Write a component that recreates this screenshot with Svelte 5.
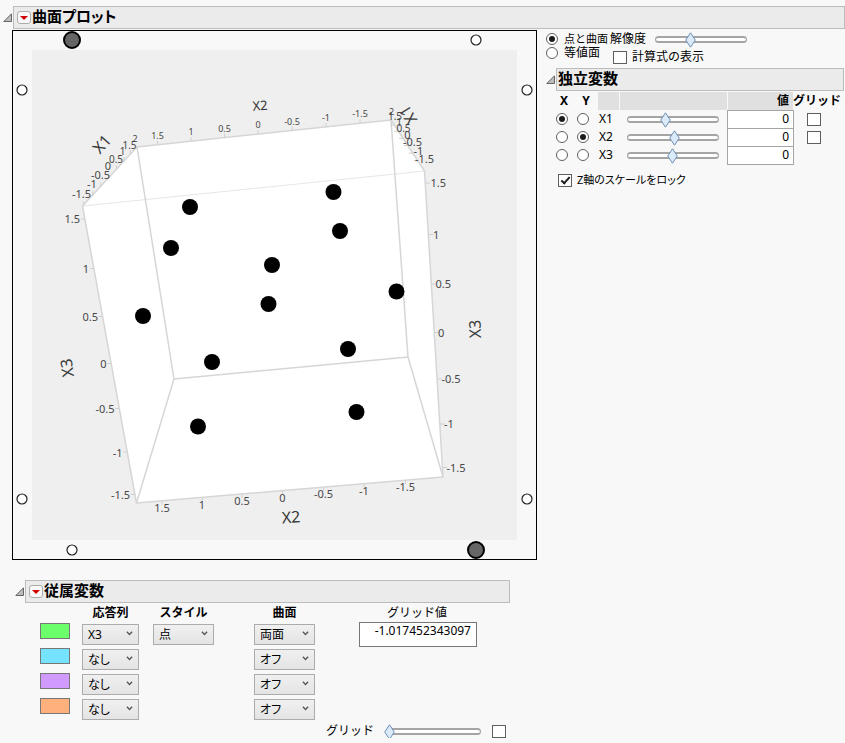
<script>
  let resolution = $state(39);
  let gridPosition = $state(0);
  let display = $state('points');
  let showFormula = $state(false);
  let lockZ = $state(true);
  let showGrid = $state(false);
  let xAxis = $state('X1');
  let yAxis = $state('X2');
  let gridValue = $state('-1.017452343097');

  let variables = $state([
    { name: 'X1', pos: 42, value: '0', grid: false, hasGrid: true },
    { name: 'X2', pos: 52, value: '0', grid: false, hasGrid: true },
    { name: 'X3', pos: 50, value: '0', grid: false, hasGrid: false }
  ]);

  let responses = $state([
    { color: '#6cff6c', column: 'X3', style: '点', surface: '両面' },
    { color: '#75e3ff', column: 'なし', style: null, surface: 'オフ' },
    { color: '#d19aff', column: 'なし', style: null, surface: 'オフ' },
    { color: '#ffb07c', column: 'なし', style: null, surface: 'オフ' }
  ]);

  const points = [
    [190, 207], [333.5, 192], [171, 248], [340, 231], [272, 265], [396.5, 291.5],
    [143, 316], [268.5, 304], [212, 362], [348, 349], [198, 426.5], [356.5, 412]
  ];

  const smallHandles = [[476, 40], [22, 90], [527, 90], [22, 499], [527, 499], [72, 550]];
  const largeHandles = [[72, 40], [476, 550]];

  // [text, x, baseline, size, anchor]
  const tickLabels = [
    ['2', 135, 142, 9, 'middle'], ['1.5', 157.5, 139, 9, 'middle'], ['1', 191, 135, 9, 'middle'],
    ['0.5', 224.5, 131.5, 9, 'middle'], ['0', 258, 128, 9, 'middle'], ['-0.5', 292, 124.5, 9, 'middle'],
    ['-1', 326, 121, 9, 'middle'], ['-1.5', 360, 117, 9, 'middle'], ['2', 391.5, 115, 9, 'middle'],

    ['1.5', 129.5, 149, 10, 'middle'], ['1', 122.5, 155, 10, 'middle'], ['0.5', 116, 162.5, 10, 'middle'],
    ['0', 108, 170, 11, 'middle'], ['-0.5', 100.5, 178.5, 11, 'middle'], ['-1', 92, 188, 11, 'middle'],
    ['-1.5', 81.5, 198, 11, 'middle'],

    ['1.5', 395, 120, 10, 'middle'], ['1', 399, 126, 10, 'middle'], ['0.5', 403.5, 131.5, 10, 'middle'],
    ['0', 407.5, 139, 11, 'middle'], ['-0.5', 412.5, 146, 11, 'middle'], ['-1', 418.5, 155, 11, 'middle'],
    ['-1.5', 424.5, 163, 11, 'middle'],

    ['1.5', 80, 223, 11, 'end'], ['1', 89, 272.5, 11, 'end'], ['0.5', 98, 321, 11, 'end'],
    ['0', 106.5, 368, 11, 'end'], ['-0.5', 114.5, 413, 11, 'end'], ['-1', 122.5, 456.5, 11, 'end'],
    ['-1.5', 130, 499, 11, 'end'],

    ['1.5', 430.5, 187, 11, 'start'], ['1', 433, 238.5, 11, 'start'], ['0.5', 435.5, 288, 11, 'start'],
    ['0', 438, 336.5, 11, 'start'], ['-0.5', 441.5, 383, 11, 'start'], ['-1', 444, 428, 11, 'start'],
    ['-1.5', 446.5, 472, 11, 'start'],

    ['1.5', 162, 512, 11, 'middle'], ['1', 202, 508.5, 11, 'middle'], ['0.5', 242, 505, 11, 'middle'],
    ['0', 282.5, 501.5, 11, 'middle'], ['-0.5', 323.5, 498, 11, 'middle'], ['-1', 364, 494.5, 11, 'middle'],
    ['-1.5', 405.5, 491, 11, 'middle']
  ];

  // [text, centre x, centre y, rotation, size]
  const axisTitles = [
    ['X2', 260, 105.5, -5, 13], ['X1', 102, 144, -48, 16], ['X1', 408, 115, -122, 16],
    ['X3', 67, 368, -98, 16], ['X3', 475, 329, -92, 16], ['X2', 291, 517, -4, 16]
  ];

  const lerp = (a, b, t) => a + (b - a) * t;
  const ticks = [
    ...[157.5, 191, 224.5, 258, 292, 326, 360].map((x) => {
      const y = lerp(147, 120, (x - 137) / 254);
      return [x, y, x, y - 4];
    }),
    ...[219, 268.5, 316.5, 363.5, 408.5, 452, 494.5].map((y) => {
      const x = lerp(82.5, 136.5, (y - 206) / 297);
      return [x, y, x - 4, y];
    }),
    ...[183, 234.5, 284, 332.5, 379, 424, 467.5].map((y) => {
      const x = lerp(424.5, 443, (y - 171) / 306);
      return [x, y, x + 5, y];
    }),
    ...[162, 202, 242, 282.5, 323.5, 364, 405.5].map((x) => {
      const y = lerp(503, 477, (x - 136.5) / 306.5);
      return [x, y, x, y + 4];
    }),
    ...[0.12, 0.24, 0.38, 0.52, 0.67, 0.82, 0.99].map((t) => {
      const x = lerp(137, 83, t), y = lerp(147, 206, t);
      return [x, y, x, y - 4];
    }),
    ...[0.1, 0.22, 0.36, 0.5, 0.65, 0.8].map((t) => {
      const x = lerp(391, 424.5, t), y = lerp(120, 171, t);
      return [x, y, x - 4, y];
    })
  ];
</script>

{#snippet disclosure(label)}
  <button class="disclosure" type="button" aria-label={label}>
    <svg width="9" height="9" viewBox="0 0 9 9"><path d="M8.5 0.8V8.5H0.8Z" fill="#bdbdbd" stroke="#666" /></svg>
  </button>
{/snippet}

{#snippet redMenu(label)}
  <button class="red-menu" type="button" aria-label={label}>
    <svg width="8" height="4" viewBox="0 0 8 4"><path d="M0 0H8L4 4Z" fill="#d00000" /></svg>
  </button>
{/snippet}

{#snippet thumb(pos)}
  <svg class="thumb" style="left: {pos}%" width="11" height="16" viewBox="0 0 11 16">
    <path d="M5.5 0.8L10.3 8L5.5 15.2L0.7 8Z" fill="#dbeaf8" stroke="#6f8fb3" />
  </svg>
{/snippet}

{#snippet chevron()}
  <svg class="chevron" width="7" height="5" viewBox="0 0 7 5"><path d="M0.9 0.7L3.5 3.5L6.1 0.7" fill="none" stroke="#555" stroke-width="1.3" /></svg>
{/snippet}

<main>
  <header class="outline">
    {@render disclosure('曲面プロットの開閉')}
    <div class="bar">
      {@render redMenu('曲面プロットのメニュー')}
      <h1>曲面プロット</h1>
    </div>
  </header>

  <div class="body">
    <div class="left">
      <svg class="plot" viewBox="12 30 525 530" role="img" aria-label="曲面プロット">
        <rect x="12.5" y="30.5" width="524" height="529" fill="#f8f8f8" stroke="#000" />
        <rect x="32" y="50" width="485" height="490" fill="#efefef" />
        <path d="M137 147L391 120L424.5 171L443 477L136.5 503L82.5 206Z" fill="#fff" />
        <path d="M82.5 206L424.5 171" stroke="#e6e6e6" />
        <g stroke="#d6d6d6" stroke-width="1.5" fill="none" stroke-linejoin="round">
          <path d="M137 147L391 120L424.5 171L443 477L136.5 503L82.5 206Z" />
          <path d="M137 147L174 379L408 357L391 120M174 379L136.5 503M408 357L443 477" />
        </g>
        {#each ticks as [x1, y1, x2, y2]}
          <line {x1} {y1} {x2} {y2} stroke="#d0d0d0" />
        {/each}
        {#each tickLabels as [text, x, y, size, anchor]}
          <text {x} {y} font-size={size} text-anchor={anchor} fill="#484848">{text}</text>
        {/each}
        {#each axisTitles as [text, x, y, angle, size]}
          <text transform="translate({x} {y}) rotate({angle})" dy="0.36em" font-size={size} text-anchor="middle" fill="#383838">{text}</text>
        {/each}
        {#each points as [cx, cy]}
          <circle {cx} {cy} r="8" />
        {/each}
        {#each smallHandles as [cx, cy]}
          <circle {cx} {cy} r="5" fill="#fff" stroke="#222" stroke-width="1.2" />
        {/each}
        {#each largeHandles as [cx, cy]}
          <circle {cx} {cy} r="8" fill="#666" stroke="#000" stroke-width="2" />
        {/each}
      </svg>

      <section class="dependent">
        <div class="outline">
          {@render disclosure('従属変数の開閉')}
          <div class="bar">
            {@render redMenu('従属変数のメニュー')}
            <h2>従属変数</h2>
          </div>
        </div>
        <table class="responses">
          <thead>
            <tr>
              <th class="c-swatch"></th>
              <th class="c-column">応答列</th>
              <th class="c-style">スタイル</th>
              <th class="c-surface">曲面</th>
              <th class="c-value">グリッド値</th>
            </tr>
          </thead>
          <tbody>
            {#each responses as row, i}
              <tr>
                <td class="c-swatch"><button class="swatch" type="button" style="background: {row.color}" aria-label="色 {i + 1}"></button></td>
                <td class="c-column">
                  <span class="select"><select bind:value={row.column} aria-label="応答列 {i + 1}"><option>X3</option><option>なし</option></select>{@render chevron()}</span>
                </td>
                <td class="c-style">
                  {#if row.style}
                    <span class="select"><select bind:value={row.style} aria-label="スタイル {i + 1}"><option>点</option></select>{@render chevron()}</span>
                  {/if}
                </td>
                <td class="c-surface">
                  <span class="select"><select bind:value={row.surface} aria-label="曲面 {i + 1}"><option>両面</option><option>オフ</option></select>{@render chevron()}</span>
                </td>
                <td class="c-value">
                  {#if i === 0}<input class="grid-value" type="text" bind:value={gridValue} aria-label="グリッド値" />{/if}
                </td>
              </tr>
            {/each}
          </tbody>
        </table>
        <div class="grid-row">
          <label for="grid-slider">グリッド</label>
          <span class="slider"><input id="grid-slider" type="range" bind:value={gridPosition} />{@render thumb(gridPosition)}</span>
          <input type="checkbox" bind:checked={showGrid} aria-label="グリッドの表示" />
        </div>
      </section>
    </div>

    <aside>
      <div class="options">
        <div class="modes">
          <label><input type="radio" name="display" value="points" bind:group={display} /><span class="small">点と曲面</span></label>
          <label><input type="radio" name="display" value="iso" bind:group={display} />等値面</label>
        </div>
        <div class="settings">
          <div class="resolution">
            <label for="resolution">解像度</label>
            <span class="slider"><input id="resolution" type="range" bind:value={resolution} />{@render thumb(resolution)}</span>
          </div>
          <label class="formula"><input type="checkbox" bind:checked={showFormula} />計算式の表示</label>
        </div>
      </div>

      <div class="outline">
        {@render disclosure('独立変数の開閉')}
        <div class="bar plain"><h2>独立変数</h2></div>
      </div>

      <table class="variables">
        <thead>
          <tr>
            <th class="v-axis">X</th>
            <th class="v-axis">Y</th>
            <th class="v-name shade"></th>
            <th class="v-slider shade"></th>
            <th class="v-value shade">値</th>
            <th class="v-grid">グリッド</th>
          </tr>
        </thead>
        <tbody>
          {#each variables as v}
            <tr>
              <td><input type="radio" name="x-axis" value={v.name} bind:group={xAxis} aria-label="X: {v.name}" /></td>
              <td><input type="radio" name="y-axis" value={v.name} bind:group={yAxis} aria-label="Y: {v.name}" /></td>
              <td class="v-name">{v.name}</td>
              <td><span class="slider"><input type="range" bind:value={v.pos} aria-label="{v.name} のスライダ" />{@render thumb(v.pos)}</span></td>
              <td><input class="number" type="text" bind:value={v.value} aria-label="{v.name} の値" /></td>
              <td>{#if v.hasGrid}<input type="checkbox" bind:checked={v.grid} aria-label="{v.name} のグリッド" />{/if}</td>
            </tr>
          {/each}
        </tbody>
      </table>

      <label class="lock"><input type="checkbox" bind:checked={lockZ} /><span class="small tight">Z軸のスケールをロック</span></label>
    </aside>
  </div>
</main>

<style>
  :global(body) { margin: 0; background: #f8f8f8; }
  main, main button, main input, main select {
    font-family: 'Noto Sans', 'Noto Sans CJK JP', sans-serif;
    font-size: 12px;
    color: #000;
  }
  main { padding-top: 6px; line-height: 14px; }
  main *, main *::before { box-sizing: border-box; }
  svg { display: block; }
  .tight { font-feature-settings: 'palt'; }
  .small { font-size: 11px; }

  .outline { display: flex; align-items: center; gap: 1px; }
  header.outline { padding-left: 3px; }
  .bar {
    flex: 1;
    display: flex;
    align-items: center;
    gap: 1px;
    height: 23px;
    padding-left: 3px;
    background: #ebebeb;
    border: 1px solid #bcbcbc;
  }
  .plain { padding-left: 1px; }
  h1, h2 { margin: 0; font-size: 15px; line-height: 18px; font-weight: 700; padding-bottom: 3px; white-space: nowrap; }
  h1 { font-feature-settings: 'palt'; }
  button { padding: 0; border: 0; background: none; }
  .disclosure { width: 9px; height: 9px; }
  .red-menu {
    display: flex;
    align-items: center;
    justify-content: center;
    width: 14px;
    height: 13px;
    background: #f8f8f8;
    border: 1px solid #adadad;
    border-radius: 3px;
  }

  .body { display: flex; align-items: flex-start; gap: 8px; padding: 1px 1px 0 12px; }
  .left { flex: 0 1 525px; min-width: 0; }
  .plot { width: 100%; height: auto; }
  aside { flex: 1; min-width: 0; }

  input[type='radio'], input[type='checkbox'] {
    appearance: none;
    display: grid;
    place-content: center;
    flex: none;
    margin: 0;
    background: #fff;
    border: 1px solid #5f5f5f;
  }
  input[type='radio'] { width: 12px; height: 12px; border-radius: 50%; }
  input[type='radio']:checked::before { content: ''; width: 6px; height: 6px; border-radius: 50%; background: #1c1c1c; }
  input[type='checkbox'] { width: 14px; height: 13px; }
  input[type='checkbox']:checked::before {
    content: '';
    width: 5px;
    height: 9px;
    margin-bottom: 2px;
    border: solid #1c1c1c;
    border-width: 0 2px 2px 0;
    transform: rotate(42deg);
  }
  label { white-space: nowrap; }

  .slider {
    position: relative;
    display: block;
    width: 92px;
    height: 7px;
    background: #fff;
    border: 2px solid #a5a5a5;
    border-left-width: 1px;
    border-right-width: 1px;
    border-radius: 4px;
  }
  .slider input { position: absolute; left: -5px; top: -7px; width: calc(100% + 10px); height: 16px; margin: 0; opacity: 0; }
  .thumb { position: absolute; top: -6px; margin-left: -6px; pointer-events: none; }

  .options { display: flex; padding: 2px 0 4px 1px; }
  .modes { width: 64px; }
  .modes label { display: flex; align-items: center; gap: 6px; height: 14px; }
  .resolution { display: flex; align-items: center; gap: 9px; height: 14px; }
  .formula { display: flex; align-items: center; gap: 5px; margin-top: 4px; padding-left: 3px; height: 14px; }
  aside .outline { padding-left: 1px; }

  table { border-collapse: separate; border-spacing: 0; table-layout: fixed; }
  th, td { padding: 0; white-space: nowrap; font-weight: 400; }
  .variables { width: 288px; margin: 1px 0 0 8px; }
  .variables th { height: 18px; font-weight: 700; text-align: center; }
  .variables td { height: 18px; }
  .variables td > input[type='radio'] { margin-left: 3px; }
  .variables td > input[type='checkbox'] { margin-left: 14px; }
  .v-axis { width: 22px; }
  .variables td:first-child + td > input[type='radio'] { margin-left: 2px; }
  .v-name { width: 22px; }
  .variables td.v-name { padding-left: 2px; }
  .v-slider { width: 108px; }
  .variables .slider { margin: 0 auto; }
  .variables .v-value { width: 66px; text-align: right; padding-right: 4px; }
  .v-grid { width: 48px; }
  .shade { background: #e0e0e0; border-left: 1px solid #f8f8f8; }
  .number {
    display: block;
    width: 67px;
    height: 19px;
    margin: 0 0 -1px;
    padding: 0 4px 2px;
    text-align: right;
    background: #fff;
    border: 1px solid #a5a5a5;
  }
  .lock { display: flex; align-items: center; gap: 5px; margin: 9px 0 0 13px; height: 14px; }

  .dependent { margin: 20px 27px 0 3px; }
  .responses { width: 437px; margin-left: 25px; }
  .responses th { height: 19px; font-weight: 700; text-align: center; padding-right: 2px; }
  .responses th.c-value { font-weight: 400; padding-right: 2px; }
  .responses td { height: 25px; vertical-align: top; padding-top: 2px; }
  .responses .c-swatch { width: 42px; padding-top: 1px; }
  .c-column { width: 71px; }
  .c-style { width: 101px; }
  .c-surface { width: 105px; }
  .responses .c-column { padding-right: 14px; }
  .responses .c-style { padding-right: 40px; }
  .responses .c-surface { padding-right: 44px; }
  .responses .c-value { width: 118px; padding-top: 0; }
  .swatch { display: block; width: 30px; height: 16px; border: 1px solid #777; }
  .select { position: relative; display: block; height: 21px; }
  select {
    appearance: none;
    display: block;
    width: 100%;
    height: 21px;
    margin: 0;
    padding: 0 16px 0 5px;
    font-feature-settings: 'palt';
    background: linear-gradient(#f0f0f0, #e4e4e4);
    border: 1px solid #acacac;
    border-radius: 0;
  }
  .chevron { position: absolute; right: 6px; top: 7px; pointer-events: none; }
  .grid-value {
    display: block;
    width: 100%;
    height: 25px;
    margin: 0;
    padding: 0 5px 8px 0;
    text-align: right;
    background: #fff;
    border: 1px solid #777;
  }
  .grid-row { display: flex; align-items: center; justify-content: flex-end; height: 14px; margin-top: 2px; padding-right: 4px; }
  .grid-row label { margin-right: 15px; }
  .grid-row .slider { margin-right: 11px; }
</style>
